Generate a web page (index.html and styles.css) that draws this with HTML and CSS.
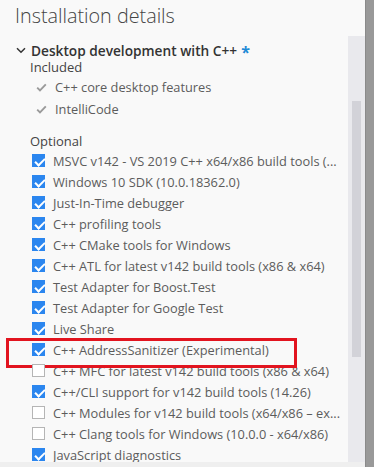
FILE: index.html
```html
<!DOCTYPE html>
<html>
<head>
<meta charset="utf-8">
<link rel="stylesheet" href="styles.css">
</head>
<body>
<div class="frame">
  <div class="main">
    <div class="header"><h1 class="title">Installation details</h1></div>
    <div class="pane">
      <div class="content">
        <div class="workload">
          <svg class="chev" width="10" height="7" viewBox="0 0 10 7"><path d="M1 1.2 L5 5.2 L9 1.2" fill="none" stroke="#333" stroke-width="1.5"/></svg>
          <span class="wl-name">Desktop development with C++</span>
          <span class="star">*</span>
        </div>
        <div class="group-label">Included</div>
        <div class="inc-row"><svg class="tick" width="11" height="9" viewBox="0 0 11 9"><path d="M1.2 4.6 L4 7.4 L9.8 1.4" fill="none" stroke="#9a9a9a" stroke-width="1.9"/></svg><span class="label">C++ core desktop features</span></div>
        <div class="inc-row"><svg class="tick" width="11" height="9" viewBox="0 0 11 9"><path d="M1.2 4.6 L4 7.4 L9.8 1.4" fill="none" stroke="#9a9a9a" stroke-width="1.9"/></svg><span class="label">IntelliCode</span></div>
        <div class="group-label optional">Optional</div>
        <div class="opt-list">
          <div class="opt-row"><span class="cb on"></span><span class="label">MSVC v142 - VS 2019 C++ x64/x86 build tools (...</span></div>
          <div class="opt-row"><span class="cb on"></span><span class="label">Windows 10 SDK (10.0.18362.0)</span></div>
          <div class="opt-row"><span class="cb on"></span><span class="label">Just-In-Time debugger</span></div>
          <div class="opt-row"><span class="cb on"></span><span class="label">C++ profiling tools</span></div>
          <div class="opt-row"><span class="cb on"></span><span class="label">C++ CMake tools for Windows</span></div>
          <div class="opt-row"><span class="cb on"></span><span class="label">C++ ATL for latest v142 build tools (x86 &amp; x64)</span></div>
          <div class="opt-row"><span class="cb on"></span><span class="label">Test Adapter for Boost.Test</span></div>
          <div class="opt-row"><span class="cb on"></span><span class="label">Test Adapter for Google Test</span></div>
          <div class="opt-row"><span class="cb on"></span><span class="label">Live Share</span></div>
          <div class="opt-row highlight"><span class="cb on"></span><span class="label">C++ AddressSanitizer (Experimental)</span></div>
          <div class="opt-row"><span class="cb"></span><span class="label">C++ MFC for latest v142 build tools (x86 &amp; x64)</span></div>
          <div class="opt-row"><span class="cb on"></span><span class="label">C++/CLI support for v142 build tools (14.26)</span></div>
          <div class="opt-row"><span class="cb"></span><span class="label">C++ Modules for v142 build tools (x64/x86 – ex...</span></div>
          <div class="opt-row"><span class="cb"></span><span class="label">C++ Clang tools for Windows (10.0.0 - x64/x86)</span></div>
          <div class="opt-row"><span class="cb on"></span><span class="label">JavaScript diagnostics</span></div>
        </div>
      </div>
      <div class="track"><div class="thumb"></div></div>
    </div>
    <div class="bottom"></div>
  </div>
  <div class="edge"></div>
</div>
</body>
</html>
```

FILE: styles.css
```css
* { box-sizing: border-box; }
html, body { margin: 0; padding: 0; }
body {
  width: 374px;
  height: 467px;
  overflow: hidden;
  background: #f9f9f9;
  font-family: "Open Sans", "Noto Sans", sans-serif;
  color: #555;
}
.frame { display: flex; height: 467px; }
.main { width: 365px; display: flex; flex-direction: column; }
.edge {
  width: 9px;
  background: #999;
  border-left: 1px solid #8a8a8a;
}
.header { height: 36px; padding: 2px 0 0 15px; }
.title {
  margin: 0;
  font-size: 19.8px;
  font-weight: 300;
  color: #444;
  line-height: 28px;
}
.pane { flex: 1; display: flex; min-height: 0; }
.content { width: 348px; padding: 4px 0 0 0; overflow: hidden; }
.track { width: 17px; background: #e9e9ed; padding: 65px 4px 0 4px; }
.thumb { width: 9px; height: 256px; background: #d2d2d8; }
.bottom { height: 5px; background: #efefef; }

.workload { display: flex; align-items: center; height: 18px; padding-left: 16px; margin-top: 1px; }
.chev { margin-right: 5px; }
.wl-name { font-size: 13.7px; font-weight: 600; color: #333; }
.star { color: #1e8ad6; font-weight: 700; font-size: 16px; margin-left: 4px; line-height: 18px; position: relative; top: 2px; }
.group-label { font-size: 13px; color: #444; padding-left: 30px; line-height: 18px; }
.workload + .group-label { margin-top: -1px; }
.optional { margin-top: 12px; }
.inc-row { display: flex; align-items: center; height: 22px; padding-left: 36px; }
.tick { margin-right: 8px; }
.label { font-size: 12.8px; color: #5c5c5c; white-space: nowrap; }
.opt-list { display: flex; flex-direction: column; }
.opt-row { display: flex; align-items: center; height: 21px; padding-left: 32px; }
.cb {
  width: 13px; height: 13px;
  border: 1px solid #b5b5b5;
  background: #fff;
  margin-right: 8px;
  flex: none;
  position: relative;
}
.cb.on { background: #2b86ef; border-color: #2b86ef; }
.cb.on::after {
  content: "";
  position: absolute;
  left: 3.5px; top: 0.5px;
  width: 4px; height: 8px;
  border: solid #fff;
  border-width: 0 2.2px 2.2px 0;
  transform: rotate(45deg);
}
.highlight { position: relative; }
.highlight::before {
  content: "";
  position: absolute;
  left: 6px; top: -1px;
  width: 285px; height: 24px;
  border: 3px solid #e2141f;
}
```
